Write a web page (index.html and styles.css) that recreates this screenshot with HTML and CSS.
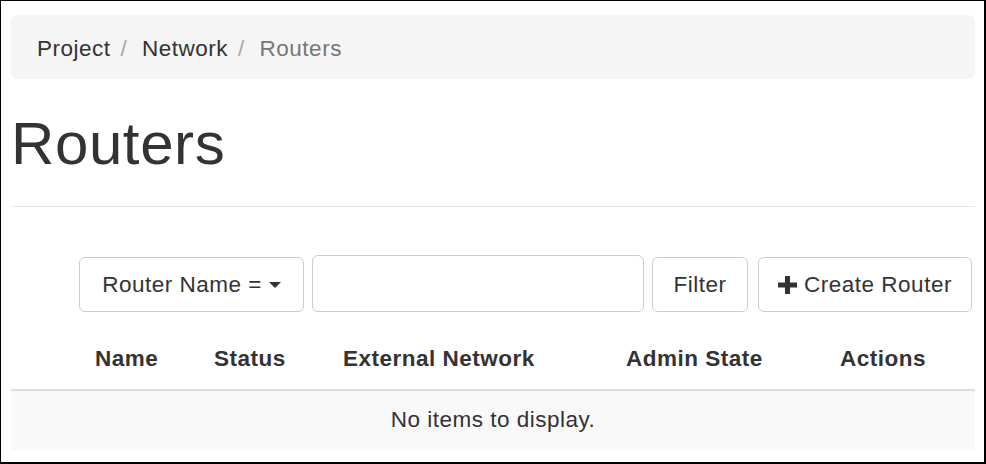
FILE: index.html
```html
<!DOCTYPE html>
<html lang="en">
<head>
<meta charset="utf-8">
<title>Routers</title>
<link rel="stylesheet" href="styles.css">
</head>
<body>
<div class="frame">
  <nav class="breadcrumb">
    <span class="crumb">Project</span><span class="sep">/&nbsp;</span><span class="crumb">Network</span><span class="sep">/&nbsp;</span><span class="crumb active">Routers</span>
  </nav>
  <h1 class="title">Routers</h1>
  <div class="rule"></div>
  <div class="toolbar">
    <button class="btn btn-dropdown">Router Name =<span class="caret"></span></button>
    <input class="search" type="text">
    <button class="btn btn-filter">Filter</button>
    <button class="btn btn-create"><svg class="plus" width="19" height="18" viewBox="0 0 19 18"><rect x="7" y="0" width="5" height="18" fill="#333"/><rect x="0" y="6.5" width="19" height="5" fill="#333"/></svg>Create Router</button>
  </div>
  <div class="table">
    <div class="thead">
      <div class="th"></div>
      <div class="th">Name</div>
      <div class="th">Status</div>
      <div class="th">External Network</div>
      <div class="th">Admin State</div>
      <div class="th">Actions</div>
    </div>
    <div class="empty">No items to display.</div>
  </div>
</div>
</body>
</html>
```

FILE: styles.css
```css
* { box-sizing: border-box; }
html, body { margin: 0; padding: 0; background: #fff; }
body {
  font-family: "Liberation Sans", Helvetica, Arial, sans-serif;
  color: #333;
  font-size: 22.5px;
  letter-spacing: 0.5px;
}
.frame {
  width: 986px;
  height: 464px;
  border: 1px solid #000;
  border-right-width: 2px;
  border-bottom-width: 2px;
  padding: 14px 9px 0 10px;
  overflow: hidden;
}
.breadcrumb {
  height: 64px;
  background: #f5f5f5;
  border-radius: 6px;
  padding: 3px 0 0 26px;
  display: flex;
  align-items: center;
  line-height: 32px;
}
.crumb { color: #333; }
.crumb.active { color: #777; }
.sep { color: #a8a8a8; padding: 0 8px 0 10px; }
.title {
  margin: 32px 0 0;
  font-size: 60px;
  line-height: 66px;
  font-weight: normal;
  letter-spacing: 0.6px;
  color: #333;
}
.rule {
  margin-top: 29px;
  border-top: 1px solid #e6e6e6;
}
.toolbar {
  margin-top: 48px;
  display: flex;
  justify-content: flex-end;
  align-items: flex-start;
  padding-right: 3px;
}
.btn {
  font: inherit;
  letter-spacing: inherit;
  color: #333;
  background: #fff;
  border: 1px solid #ccc;
  border-radius: 6px;
  height: 55px;
  margin-top: 2px;
  padding: 0;
  display: flex;
  align-items: center;
  justify-content: center;
}
.btn-dropdown { width: 225px; }
.caret {
  display: inline-block;
  width: 0;
  height: 0;
  margin-left: 7px;
  border-top: 6px solid #333;
  border-left: 6.5px solid transparent;
  border-right: 6.5px solid transparent;
}
.search {
  width: 332px;
  height: 57px;
  margin-left: 8px;
  border: 1px solid #ccc;
  border-radius: 6px;
  background: #fff;
}
.btn-filter { width: 96px; margin-left: 8px; }
.btn-create { width: 214px; margin-left: 10px; }
.plus { margin-right: 7px; margin-top: 1px; }
.table { margin-top: 18px; }
.thead {
  display: grid;
  grid-template-columns: 72px 119px 129px 283px 214px 147px;
  border-bottom: 2px solid #ddd;
}
.th {
  font-weight: bold;
  line-height: 32px;
  padding: 13px 12px 14px;
  white-space: nowrap;
}
.empty {
  background: #f9f9f9;
  text-align: center;
  line-height: 32px;
  padding: 13px 12px 14px;
}
```
